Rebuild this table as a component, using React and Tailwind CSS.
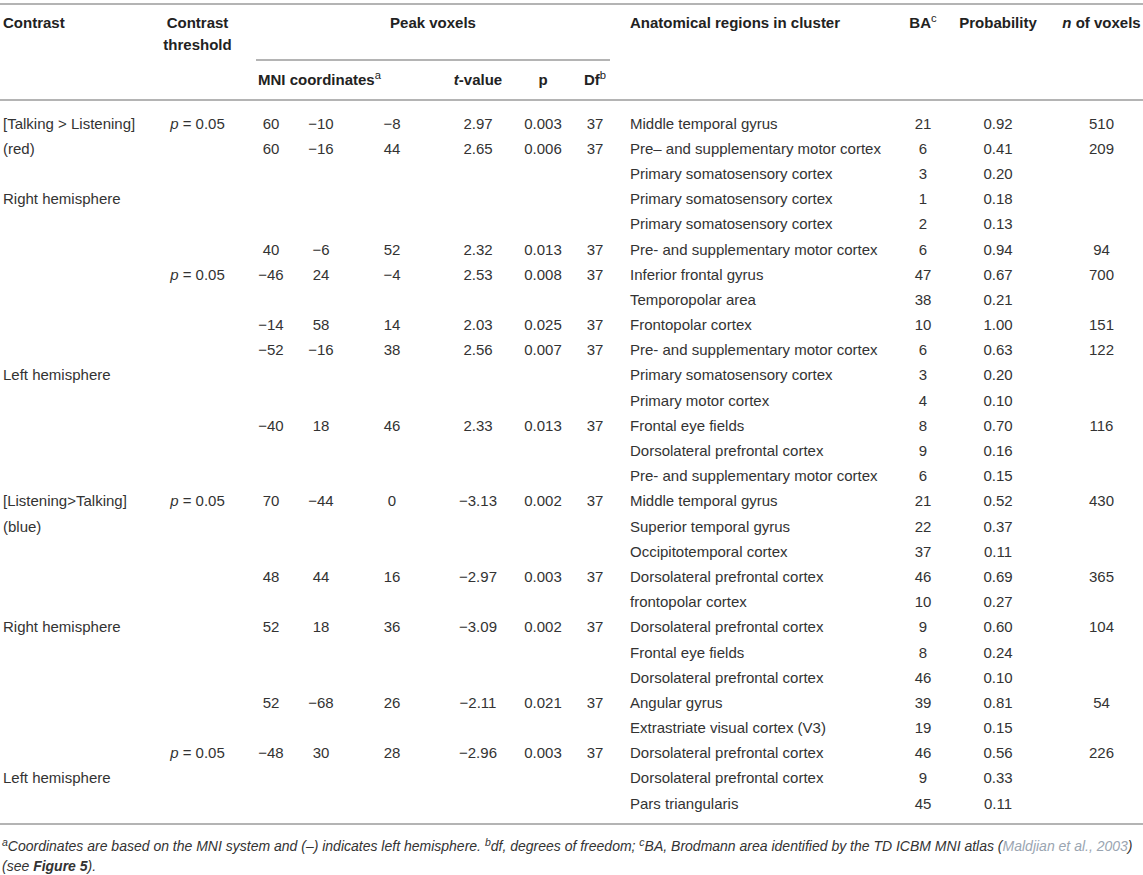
import React from 'react';

const cols = 'grid grid-cols-[155px_85px_62px_38px_104px_68px_62px_42px_274px_66px_84px_103px]';

const P = () => (
  <span>
    <i>p</i> = 0.05
  </span>
);

// contrast, threshold, x, y, z, t, p, df, region, ba, prob, n
const rows = [
  ['[Talking > Listening]', 'p', '60', '−10', '−8', '2.97', '0.003', '37', 'Middle temporal gyrus', '21', '0.92', '510'],
  ['(red)', '', '60', '−16', '44', '2.65', '0.006', '37', 'Pre– and supplementary motor cortex', '6', '0.41', '209'],
  ['', '', '', '', '', '', '', '', 'Primary somatosensory cortex', '3', '0.20', ''],
  ['Right hemisphere', '', '', '', '', '', '', '', 'Primary somatosensory cortex', '1', '0.18', ''],
  ['', '', '', '', '', '', '', '', 'Primary somatosensory cortex', '2', '0.13', ''],
  ['', '', '40', '−6', '52', '2.32', '0.013', '37', 'Pre- and supplementary motor cortex', '6', '0.94', '94'],
  ['', 'p', '−46', '24', '−4', '2.53', '0.008', '37', 'Inferior frontal gyrus', '47', '0.67', '700'],
  ['', '', '', '', '', '', '', '', 'Temporopolar area', '38', '0.21', ''],
  ['', '', '−14', '58', '14', '2.03', '0.025', '37', 'Frontopolar cortex', '10', '1.00', '151'],
  ['', '', '−52', '−16', '38', '2.56', '0.007', '37', 'Pre- and supplementary motor cortex', '6', '0.63', '122'],
  ['Left hemisphere', '', '', '', '', '', '', '', 'Primary somatosensory cortex', '3', '0.20', ''],
  ['', '', '', '', '', '', '', '', 'Primary motor cortex', '4', '0.10', ''],
  ['', '', '−40', '18', '46', '2.33', '0.013', '37', 'Frontal eye fields', '8', '0.70', '116'],
  ['', '', '', '', '', '', '', '', 'Dorsolateral prefrontal cortex', '9', '0.16', ''],
  ['', '', '', '', '', '', '', '', 'Pre- and supplementary motor cortex', '6', '0.15', ''],
  ['[Listening>Talking]', 'p', '70', '−44', '0', '−3.13', '0.002', '37', 'Middle temporal gyrus', '21', '0.52', '430'],
  ['(blue)', '', '', '', '', '', '', '', 'Superior temporal gyrus', '22', '0.37', ''],
  ['', '', '', '', '', '', '', '', 'Occipitotemporal cortex', '37', '0.11', ''],
  ['', '', '48', '44', '16', '−2.97', '0.003', '37', 'Dorsolateral prefrontal cortex', '46', '0.69', '365'],
  ['', '', '', '', '', '', '', '', 'frontopolar cortex', '10', '0.27', ''],
  ['Right hemisphere', '', '52', '18', '36', '−3.09', '0.002', '37', 'Dorsolateral prefrontal cortex', '9', '0.60', '104'],
  ['', '', '', '', '', '', '', '', 'Frontal eye fields', '8', '0.24', ''],
  ['', '', '', '', '', '', '', '', 'Dorsolateral prefrontal cortex', '46', '0.10', ''],
  ['', '', '52', '−68', '26', '−2.11', '0.021', '37', 'Angular gyrus', '39', '0.81', '54'],
  ['', '', '', '', '', '', '', '', 'Extrastriate visual cortex (V3)', '19', '0.15', ''],
  ['', 'p', '−48', '30', '28', '−2.96', '0.003', '37', 'Dorsolateral prefrontal cortex', '46', '0.56', '226'],
  ['Left hemisphere', '', '', '', '', '', '', '', 'Dorsolateral prefrontal cortex', '9', '0.33', ''],
  ['', '', '', '', '', '', '', '', 'Pars triangularis', '45', '0.11', ''],
];

const Rule = ({ className = '' }) => <div className={`h-[2px] bg-[#b4b4b4] ${className}`} />;

const Row = ({ r }) => (
  <div className={`${cols} h-[25.2px] items-center leading-[18px]`}>
    <div className="pl-[3px] whitespace-nowrap">{r[0]}</div>
    <div className="text-center">{r[1] ? <P /> : null}</div>
    <div className="text-center">{r[2]}</div>
    <div className="text-center">{r[3]}</div>
    <div className="text-center">{r[4]}</div>
    <div className="text-center">{r[5]}</div>
    <div className="text-center">{r[6]}</div>
    <div className="text-center">{r[7]}</div>
    <div className="pl-[14px] whitespace-nowrap">{r[8]}</div>
    <div className="text-center">{r[9]}</div>
    <div className="text-center">{r[10]}</div>
    <div className="pl-[20px] text-center">{r[11]}</div>
  </div>
);

const App = () => {
  return (
    <div className="w-[1143px] h-[875px] overflow-hidden bg-white font-['Liberation_Sans',Arial,sans-serif] text-[15px] text-[#333]">
      <Rule className="mt-[3px]" />

      {/* header */}
      <div className={`${cols} grid-rows-[56px_38px] font-bold text-[#222] leading-[22px]`}>
        <div className="row-span-2 pl-[3px] pt-[7px]">Contrast</div>
        <div className="row-span-2 pt-[7px] text-center">
          Contrast
          <br />
          threshold
        </div>
        <div className="col-span-6 flex flex-col">
          <div className="ml-[16px] mr-[6px] h-full pt-[7px] text-center border-b-2 border-[#b4b4b4]">Peak voxels</div>
        </div>
        <div className="row-span-2 pl-[14px] pt-[7px] whitespace-nowrap">Anatomical regions in cluster</div>
        <div className="row-span-2 pt-[7px] text-center">
          BA<sup className="font-normal">c</sup>
        </div>
        <div className="row-span-2 pt-[7px] text-center">Probability</div>
        <div className="row-span-2 pt-[7px] pl-[20px] text-center whitespace-nowrap">
          <i>n</i> of voxels
        </div>
        <div className="col-span-3 pl-[18px] pt-[8px] whitespace-nowrap">
          MNI coordinates<sup className="font-normal">a</sup>
        </div>
        <div className="pt-[8px] text-center">
          <i>t</i>-value
        </div>
        <div className="pt-[8px] text-center">p</div>
        <div className="pt-[8px] text-center">
          Df<sup className="font-normal">b</sup>
        </div>
      </div>
      <Rule />

      {/* body */}
      <div className="pt-[10px] pb-[7px]">
        {rows.map((r, i) => (
          <Row key={i} r={r} />
        ))}
      </div>
      <Rule />

      {/* footnote */}
      <div className="pt-[11px] pl-[2px] text-[14px] italic leading-[20px] text-[#333] whitespace-nowrap">
        <sup>a</sup>Coordinates are based on the MNI system and (–) indicates left hemisphere. <sup>b</sup>df, degrees of
        freedom; <sup>c</sup>BA, Brodmann area identified by the TD ICBM MNI atlas (
        <span className="text-[#9aa5b1]">Maldjian et al., 2003</span>)
        <br />
        (see <b>Figure 5</b>).
      </div>
    </div>
  );
};

export default App;
